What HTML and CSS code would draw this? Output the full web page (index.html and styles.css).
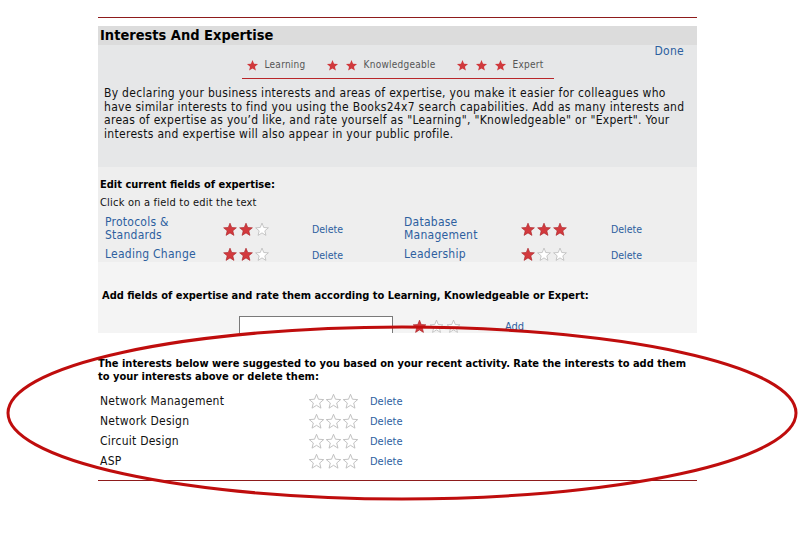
FILE: index.html
```html
<!DOCTYPE html>
<html lang="en">

<head>
    <meta charset="UTF-8">
    <meta name="viewport" content="width=device-width, initial-scale=1.0">
    <title>Interests And Expertise</title>
    <link rel="stylesheet" href="styles.css">
</head>

<body>
<svg class="defs" width="0" height="0">
    <defs>
        <symbol id="star" viewBox="0 0 24 24">
            <path d="M12 1.8l2.8 7 7.4.5-5.7 4.8 1.8 7.3L12 17.4l-6.3 4 1.8-7.3-5.7-4.8 7.4-.5z"/>
        </symbol>
    </defs>
</svg>

<div id="page">
    <div class="rule"></div>

    <div id="panel">
        <div class="panel-head">
            <h2 id="title">Interests And Expertise</h2>
        </div>

        <div class="intro">
            <div class="done-row"><a href="#">Done</a></div>
            <div class="legend-wrap">
                <div class="legend">
                    <span class="lg-item"><svg class="lg-star"><use href="#star"/></svg>Learning</span>
                    <span class="lg-item"><svg class="lg-star"><use href="#star"/></svg><svg class="lg-star"><use href="#star"/></svg>Knowledgeable</span>
                    <span class="lg-item"><svg class="lg-star"><use href="#star"/></svg><svg class="lg-star"><use href="#star"/></svg><svg class="lg-star"><use href="#star"/></svg>Expert</span>
                </div>
            </div>
            <p class="intro-text">By declaring your business interests and areas of expertise, you make it easier for colleagues who have similar interests to find you using the Books24x7 search capabilities. Add as many interests and areas of expertise as you’d like, and rate yourself as "Learning", "Knowledgeable" or "Expert". Your interests and expertise will also appear in your public profile.</p>
        </div>

        <div class="edit">
            <h3 class="sec-title">Edit current fields of expertise:</h3>
            <div class="hint">Click on a field to edit the text</div>
            <div class="fields">
                <a href="#" class="f-name">Protocols &amp; Standards</a>
                <span class="rate"><svg class="st on"><use href="#star"/></svg><svg class="st on"><use href="#star"/></svg><svg class="st off"><use href="#star"/></svg></span>
                <a href="#" class="del">Delete</a>
                <a href="#" class="f-name">Database Management</a>
                <span class="rate"><svg class="st on"><use href="#star"/></svg><svg class="st on"><use href="#star"/></svg><svg class="st on"><use href="#star"/></svg></span>
                <a href="#" class="del">Delete</a>

                <a href="#" class="f-name">Leading Change</a>
                <span class="rate"><svg class="st on"><use href="#star"/></svg><svg class="st on"><use href="#star"/></svg><svg class="st off"><use href="#star"/></svg></span>
                <a href="#" class="del">Delete</a>
                <a href="#" class="f-name">Leadership</a>
                <span class="rate"><svg class="st on"><use href="#star"/></svg><svg class="st off"><use href="#star"/></svg><svg class="st off"><use href="#star"/></svg></span>
                <a href="#" class="del">Delete</a>
            </div>
        </div>

        <div class="add">
            <h3 class="sec-title add-title">Add fields of expertise and rate them according to Learning, Knowledgeable or Expert:</h3>
            <div class="add-row">
                <input type="text" class="add-inp">
                <span class="rate"><svg class="st on"><use href="#star"/></svg><svg class="st off"><use href="#star"/></svg><svg class="st off"><use href="#star"/></svg></span>
                <a href="#" class="add-link">Add</a>
            </div>
        </div>
    </div>

    <div class="suggest">
        <h3 class="sec-title sug-title">The interests below were suggested to you based on your recent activity. Rate the interests to add them to your interests above or delete them:</h3>
        <div class="sug-list">
            <span>Network Management</span>
            <span class="rate"><svg class="st empty"><use href="#star"/></svg><svg class="st empty"><use href="#star"/></svg><svg class="st empty"><use href="#star"/></svg></span>
            <a href="#" class="del">Delete</a>

            <span>Network Design</span>
            <span class="rate"><svg class="st empty"><use href="#star"/></svg><svg class="st empty"><use href="#star"/></svg><svg class="st empty"><use href="#star"/></svg></span>
            <a href="#" class="del">Delete</a>

            <span>Circuit Design</span>
            <span class="rate"><svg class="st empty"><use href="#star"/></svg><svg class="st empty"><use href="#star"/></svg><svg class="st empty"><use href="#star"/></svg></span>
            <a href="#" class="del">Delete</a>

            <span>ASP</span>
            <span class="rate"><svg class="st empty"><use href="#star"/></svg><svg class="st empty"><use href="#star"/></svg><svg class="st empty"><use href="#star"/></svg></span>
            <a href="#" class="del">Delete</a>
        </div>
    </div>

    <div class="rule bottom-rule"></div>
</div>

<!-- hand drawn highlight round the suggestions -->
<svg class="circle" viewBox="0 0 803 539" width="803" height="539">
    <ellipse cx="402" cy="413" rx="394" ry="86" fill="none" stroke="#bf0d0d" stroke-width="3"/>
</svg>
</body>

</html>
```

FILE: styles.css
```css
body {
    margin: 0;
    background: #fff;
    font-family: "DejaVu Sans Condensed", "DejaVu Sans", sans-serif;
    color: #111;
    font-size: 12px;
}
a {
    color: #2d5f9f;
    text-decoration: none;
}
.defs {
    position: absolute;
}
#page {
    width: 599px;
    margin-left: 98px;
    padding-top: 17px;
}
.rule {
    height: 1px;
    background-color: #8e1b1b;
}
#panel {
    margin-top: 8px;
    background-color: #e6e7e8;
}
.panel-head {
    background-color: #dcdcdc;
    height: 19px;
    padding-left: 2px;
}
#title {
    margin: 0;
    font-size: 14.5px;
    line-height: 19px;
    font-weight: bold;
    color: #000;
}
.intro {
    padding: 0 13px 0 6px;
    height: 122px;
}
.done-row {
    text-align: right;
    line-height: 13px;
    height: 13px;
    letter-spacing: 0.3px;
}
.legend-wrap {
    text-align: center;
    margin-left: -6px;
    margin-right: -13px;
}
.legend {
    display: inline-flex;
    gap: 20px;
    align-items: flex-start;
    padding: 0 10px 0 4px;
    height: 20px;
    border-bottom: 1px solid #b8262a;
    font-size: 10px;
    color: #555;
    letter-spacing: 0.25px;
}
.lg-item {
    display: flex;
    align-items: center;
    gap: 6px;
    line-height: 14px;
}
.lg-star {
    width: 13px;
    height: 13px;
    fill: #d0393c;
}
.intro-text {
    margin: 8px -5px 0 0;
    line-height: 13.5px;
    letter-spacing: 0.3px;
}
.edit {
    background-color: #eeeeee;
    padding: 11px 0 0 2px;
    height: 95px;
    box-sizing: border-box;
}
.sec-title {
    margin: 0;
    font-size: 11px;
    font-weight: bold;
    color: #000;
    line-height: 14px;
}
.hint {
    font-size: 11px;
    margin-top: 4px;
    line-height: 14px;
    letter-spacing: 0.2px;
}
.fields {
    display: grid;
    grid-template-columns: 117px 90px 92px 116px 91px auto;
    align-items: center;
    row-gap: 5px;
    margin: 6px 0 0 5px;
}
.f-name {
    width: 100px;
    line-height: 13px;
    letter-spacing: 0.25px;
}
.rate {
    display: flex;
    align-items: center;
}
.st {
    width: 16px;
    height: 15px;
}
.st.on {
    fill: #d3393d;
    stroke: #a82226;
    stroke-width: 1;
}
.st.off {
    fill: #fff;
    stroke: #b5b5b5;
    stroke-width: 1.2;
}
.st.empty {
    width: 17px;
    height: 17px;
    fill: #fff;
    stroke: #bcbcbc;
    stroke-width: 1.3;
}
.del {
    font-size: 10.5px;
}
.add {
    background-color: #f4f4f4;
    height: 71px;
    box-sizing: border-box;
    padding: 27px 0 0 4px;
    overflow: hidden;
}
.add-row {
    display: flex;
    align-items: center;
    margin-top: 13px;
    padding-left: 137px;
}
.add-inp {
    width: 154px;
    height: 20px;
    box-sizing: border-box;
    border: 1px solid #7a7a7a;
    background: #fff;
    margin: 0 18px 0 0;
}
.add-row .st {
    width: 17px;
}
.add-link {
    margin-left: 43px;
    font-size: 11px;
}
.suggest {
    padding: 24px 0 9px 0;
}
.sug-title {
    line-height: 13px;
}
.sug-list {
    display: grid;
    grid-template-columns: 208px 62px auto;
    align-items: center;
    grid-auto-rows: 20px;
    margin: 8px 0 0 2px;
    letter-spacing: 0.25px;
}
.sug-list .del {
    font-size: 11px;
    letter-spacing: 0;
}
.circle {
    position: absolute;
    left: 0;
    top: 0;
    pointer-events: none;
}
```
